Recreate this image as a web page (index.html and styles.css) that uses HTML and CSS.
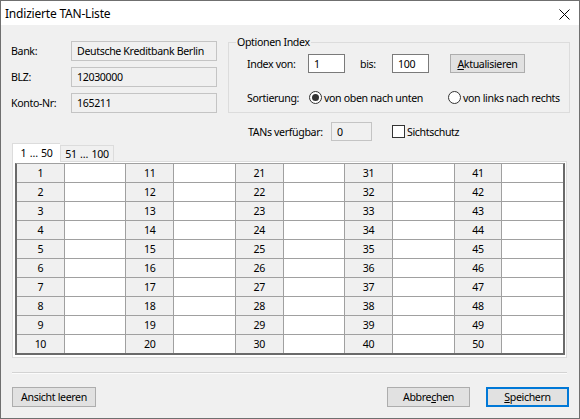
FILE: index.html
```
<!DOCTYPE html>
<html>
<head>
<meta charset="utf-8">
<link rel="stylesheet" href="styles.css">
</head>
<body>
<div class="window">
  <div class="titlebar">
    <span class="title">Indizierte TAN-Liste</span>
    <svg class="close" width="11" height="11" viewBox="0 0 11 11"><path d="M0.5 0.5 L10.5 10.5 M10.5 0.5 L0.5 10.5" stroke="#000" stroke-width="1" fill="none"/></svg>
  </div>
  <div class="content">
    <div class="top">
      <div class="account">
        <div class="field"><span class="lbl">Bank:</span><span class="input ro wide">Deutsche Kreditbank Berlin</span></div>
        <div class="field"><span class="lbl">BLZ:</span><span class="input ro wide">12030000</span></div>
        <div class="field"><span class="lbl">Konto-Nr:</span><span class="input ro wide">165211</span></div>
      </div>
      <fieldset class="group">
        <legend>Optionen Index</legend>
        <div class="grow">
          <span class="glbl">Index von:</span>
          <span class="input edit small">1</span>
          <span class="bis">bis:</span>
          <span class="input edit small">100</span>
          <span class="btn update"><u>A</u>ktualisieren</span>
        </div>
        <div class="grow second">
          <span class="glbl sort">Sortierung:</span>
          <span class="radio on"></span>
          <span class="rtext first">von oben nach unten</span>
          <span class="radio"></span>
          <span class="rtext">von links nach rechts</span>
        </div>
      </fieldset>
    </div>
    <div class="tans">
      <span class="tlbl">TANs verfügbar:</span>
      <span class="input ro count">0</span>
      <span class="check"></span>
      <span class="ctext">Sichtschutz</span>
    </div>
    <div class="tabs">
      <span class="tab active">1 … 50</span>
      <span class="tab">51 … 100</span>
    </div>
    <div class="panel">
      <div class="grid">
        <div class="n">1</div><div class="v"></div><div class="n">11</div><div class="v"></div><div class="n">21</div><div class="v"></div><div class="n">31</div><div class="v"></div><div class="n">41</div><div class="v"></div>
        <div class="n">2</div><div class="v"></div><div class="n">12</div><div class="v"></div><div class="n">22</div><div class="v"></div><div class="n">32</div><div class="v"></div><div class="n">42</div><div class="v"></div>
        <div class="n">3</div><div class="v"></div><div class="n">13</div><div class="v"></div><div class="n">23</div><div class="v"></div><div class="n">33</div><div class="v"></div><div class="n">43</div><div class="v"></div>
        <div class="n">4</div><div class="v"></div><div class="n">14</div><div class="v"></div><div class="n">24</div><div class="v"></div><div class="n">34</div><div class="v"></div><div class="n">44</div><div class="v"></div>
        <div class="n">5</div><div class="v"></div><div class="n">15</div><div class="v"></div><div class="n">25</div><div class="v"></div><div class="n">35</div><div class="v"></div><div class="n">45</div><div class="v"></div>
        <div class="n">6</div><div class="v"></div><div class="n">16</div><div class="v"></div><div class="n">26</div><div class="v"></div><div class="n">36</div><div class="v"></div><div class="n">46</div><div class="v"></div>
        <div class="n">7</div><div class="v"></div><div class="n">17</div><div class="v"></div><div class="n">27</div><div class="v"></div><div class="n">37</div><div class="v"></div><div class="n">47</div><div class="v"></div>
        <div class="n">8</div><div class="v"></div><div class="n">18</div><div class="v"></div><div class="n">28</div><div class="v"></div><div class="n">38</div><div class="v"></div><div class="n">48</div><div class="v"></div>
        <div class="n">9</div><div class="v"></div><div class="n">19</div><div class="v"></div><div class="n">29</div><div class="v"></div><div class="n">39</div><div class="v"></div><div class="n">49</div><div class="v"></div>
        <div class="n">10</div><div class="v"></div><div class="n">20</div><div class="v"></div><div class="n">30</div><div class="v"></div><div class="n">40</div><div class="v"></div><div class="n">50</div><div class="v"></div>
      </div>
    </div>
    <div class="sep"></div>
    <div class="buttons">
      <span class="btn clear">Ansicht leeren</span>
      <span class="spacer"></span>
      <span class="btn cancel">Abbre<u>c</u>hen</span>
      <span class="btn save"><u>S</u>peichern</span>
    </div>
  </div>
</div>
</body>
</html>
```
FILE: styles.css
```
* { box-sizing: border-box; }
html, body { margin: 0; padding: 0; }
body {
  font-family: "Noto Sans", "Open Sans", sans-serif;
  font-size: 10.6px;
  letter-spacing: -0.35px;
  color: #000;
  background: #f0f0f0;
}
.window {
  width: 580px;
  height: 419px;
  border: 1px solid #6f6f6f;
  background: #f0f0f0;
  display: flex;
  flex-direction: column;
}
.titlebar {
  height: 24px;
  background: #fff;
  display: flex;
  align-items: center;
  justify-content: space-between;
  padding: 0 9px 0 4px;
  flex: none;
}
.title { font-size: 12px; letter-spacing: -0.2px; line-height: 16px; margin-top: 1px; }
.close { display: block; margin-top: 2px; }
.content {
  padding: 0 9px 0 10px;
  display: flex;
  flex-direction: column;
}
.top { display: flex; margin-top: 9px; }
.account {
  padding-top: 7px;
  display: flex;
  flex-direction: column;
  gap: 6px;
  width: 206px;
  flex: none;
}
.field { display: flex; align-items: center; height: 20px; }
.lbl { width: 60px; flex: none; }
.input {
  display: flex;
  align-items: center;
  height: 20px;
  padding-left: 5px;
  border: 1px solid #adadad;
  flex: none;
  white-space: nowrap;
}
.ro { background: #f0f0f0; border-color: #c4c4c4; }
.wide { width: 146px; }
.edit { background: #fff; border-color: #7a7a7a; height: 19px; }
.small { width: 37px; }
.group {
  margin: 0 0 0 11px;
  padding: 4px 0 5px 7px;
  border: 1px solid #dcdcdc;
  flex: 1;
  min-width: 0;
}
.group legend {
  padding: 0 1px;
  line-height: 16px;
  height: 16px;
}
.grow {
  display: flex;
  align-items: center;
  height: 19px;
  padding-left: 11px;
}
.grow.second { margin-top: 15px; }
.glbl { width: 61px; flex: none; }
.glbl.sort { width: 62px; }
.bis { margin-left: 15px; width: 32px; flex: none; }
.btn {
  display: flex;
  align-items: center;
  justify-content: center;
  background: #e1e1e1;
  border: 1px solid #adadad;
  flex: none;
  white-space: nowrap;
}
.btn u { text-decoration-thickness: 1px; text-underline-offset: 1px; }
.update { margin-left: 21px; width: 75px; height: 19px; }
.radio {
  width: 13px;
  height: 13px;
  border: 1px solid #333;
  border-radius: 50%;
  background: #fff;
  flex: none;
  display: flex;
  align-items: center;
  justify-content: center;
}
.radio.on::after {
  content: "";
  width: 7px;
  height: 7px;
  border-radius: 50%;
  background: #333;
}
.rtext { margin-left: 2px; white-space: nowrap; }
.rtext.first { width: 124px; flex: none; }
.tans {
  display: flex;
  align-items: center;
  height: 19px;
  margin-top: 9px;
  padding-left: 237px;
}
.tlbl { width: 83px; flex: none; }
.count { width: 41px; height: 19px; }
.check {
  width: 13px;
  height: 13px;
  border: 1px solid #333;
  background: #fff;
  margin-left: 20px;
  flex: none;
}
.ctext { margin-left: 2px; }
.tabs {
  display: flex;
  align-items: flex-end;
  height: 18px;
  margin-top: 2px;
  margin-left: 1px;
  position: relative;
  z-index: 1;
}
.tab {
  height: 16px;
  display: flex;
  align-items: center;
  justify-content: center;
  border: 1px solid #dcdcdc;
  border-bottom: none;
  background: #f0f0f0;
  width: 54px;
  white-space: nowrap;
  word-spacing: 1px;
}
.tab.active {
  height: 19px;
  width: 48px;
  margin-bottom: -1px;
  background: #fff;
  border-right: none;
  padding-bottom: 1px;
}
.panel {
  margin-left: 1px;
  width: 555px;
  border: 1px solid #dcdcdc;
  background: #fff;
  padding: 1px 1px 2px 2px;
}
.grid {
  width: 550px;
  display: grid;
  grid-template-columns: repeat(5, 47fr 61fr);
  grid-auto-rows: 18px;
  gap: 1px;
  background: #a0a0a0;
  border-top: 1px solid #a0a0a0;
  border-left: 2px solid #6a6a6a;
  border-right: 2px solid #6a6a6a;
  border-bottom: 2px solid #6a6a6a;
}
.grid > div {
  display: flex;
  align-items: center;
  justify-content: center;
  min-width: 0;
}
.n { background: #f0f0f0; }
.v { background: #fff; }
.sep {
  margin: 14px 3px 0 1px;
  height: 2px;
  border-top: 1px solid #d3d3d3;
  border-bottom: 1px solid #fbfbfb;
}
.buttons {
  display: flex;
  margin-top: 13px;
  padding: 0 1px;
}
.buttons .btn { height: 20px; }
.clear { width: 84px; }
.spacer { flex: 1; }
.cancel { width: 83px; }
.save {
  width: 83px;
  margin-left: 16px;
  border: 1px solid #0078d7;
  box-shadow: inset 0 0 0 1px #0078d7;
}
```
